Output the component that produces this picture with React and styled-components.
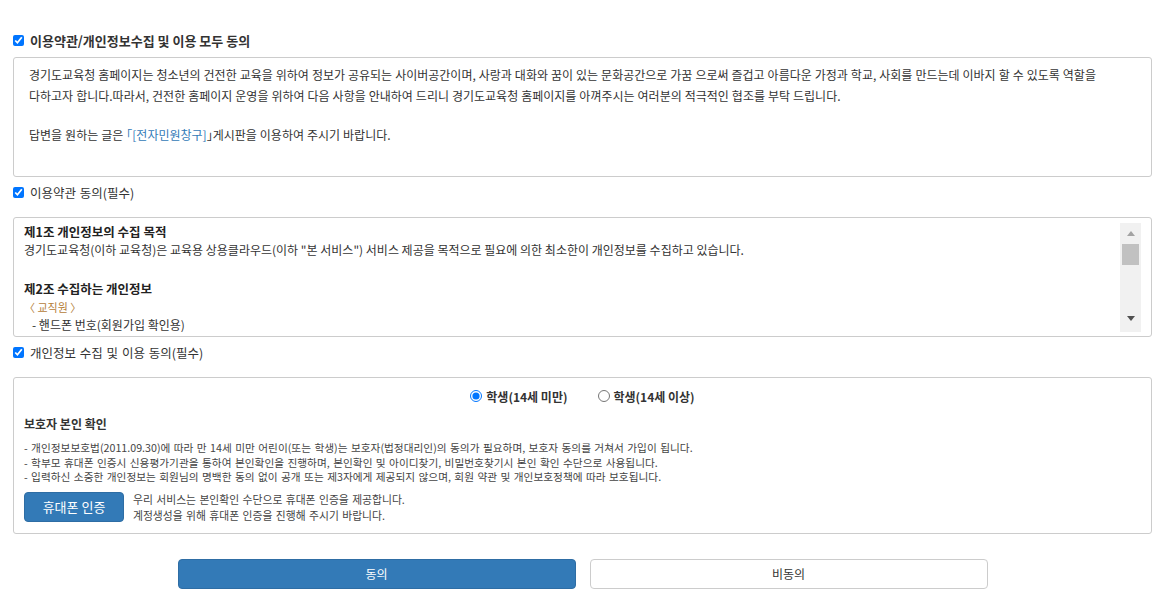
import React from "react";
import styled, { createGlobalStyle } from "styled-components";

const GlobalStyle = createGlobalStyle`
  html, body {
    margin: 0;
    padding: 0;
    background: #fff;
  }
  body {
    font-family: "Noto Sans CJK KR", "Noto Sans", sans-serif;
    color: #333;
    font-size: 12px;
  }
  * {
    box-sizing: border-box;
  }
`;

const Page = styled.div`
  width: 1176px;
  padding: 30px 24px 0 13px;
`;

const CheckRow = styled.label`
  display: flex;
  align-items: center;
  gap: 6px;
  height: 20px;
  margin: ${(p) => (p.$first ? "0 0 7px" : "5px 0 15px")};
  font-size: ${(p) => (p.$bold ? "13px" : "12.5px")};
  font-weight: ${(p) => (p.$bold ? 700 : 400)};
  word-spacing: ${(p) => (p.$bold ? "0" : "1px")};
  color: #333;
`;

const Check = styled.input.attrs({ type: "checkbox" })`
  width: 11px;
  height: 11px;
  margin: 0;
`;

const Panel = styled.div`
  border: 1px solid #ccc;
  border-radius: 3px;
  background: #fff;
`;

const NoticeBox = styled(Panel)`
  height: 120px;
  padding: 6px 15px;
  font-size: 12px;
  line-height: 21px;
  word-spacing: 0.3px;
  overflow: hidden;
`;

const NoticePara = styled.p`
  margin: 0 0 ${(p) => p.$gap || 0}px;
`;

const LinkText = styled.a`
  color: #337ab7;
  text-decoration: none;
`;

const TermsBox = styled(Panel)`
  display: flex;
  height: 120px;
  padding: 5px 10px 4px 10px;
`;

const TermsScroll = styled.div`
  flex: 1;
  overflow: hidden;
  font-size: 12px;
  line-height: 18px;
`;

const TermsTitle = styled.h4`
  margin: ${(p) => (p.$spaced ? "21px 0 0" : "0")};
  font-size: 12.5px;
  font-weight: 700;
  line-height: 18px;
  color: #222;
`;

const Group = styled.div`
  font-size: 11px;
  color: #b5803a;
`;

const Item = styled.div`
  padding-left: 8px;
`;

const ScrollTrack = styled.div`
  display: flex;
  flex-direction: column;
  width: 21px;
  background: #f1f1f1;
`;

const ScrollButton = styled.div`
  display: flex;
  align-items: center;
  justify-content: center;
  height: 21px;
  padding-bottom: ${(p) => (p.$down ? "6px" : "0")};
`;

const ScrollThumb = styled.div`
  height: 21px;
  margin: 0 2px;
  background: #c1c1c1;
`;

const ScrollGap = styled.div`
  flex: 1;
`;

const AuthBox = styled(Panel)`
  padding: 8px 10px 10px;
`;

const RadioRow = styled.div`
  display: flex;
  justify-content: center;
  align-items: center;
  gap: 30px;
  height: 20px;
`;

const RadioLabel = styled.label`
  display: flex;
  align-items: center;
  gap: 4px;
  font-size: 12px;
  font-weight: 700;
  color: #333;
`;

const Radio = styled.input.attrs({ type: "radio" })`
  width: 12px;
  height: 12px;
  margin: 0;
`;

const AuthTitle = styled.h5`
  margin: 9px 0 0;
  font-size: 12px;
  font-weight: 700;
  line-height: 18px;
  color: #333;
`;

const Bullets = styled.ul`
  list-style: none;
  margin: 8px 0 0;
  padding: 0;
  font-size: 10.7px;
  line-height: 14.5px;
  word-spacing: 1px;
  color: #444;
`;

const PhoneRow = styled.div`
  display: flex;
  align-items: center;
  gap: 9px;
  margin-top: 6px;
`;

const Button = styled.button`
  height: 30px;
  border-radius: 4px;
  font-family: inherit;
  font-size: 12px;
  cursor: pointer;
  border: 1px solid ${(p) => (p.$primary ? "#2e6da4" : "#ccc")};
  background: ${(p) => (p.$primary ? "#337ab7" : "#fff")};
  color: ${(p) => (p.$primary ? "#fff" : "#333")};
`;

const PhoneButton = styled(Button)`
  width: 100px;
  font-size: 13px;
`;

const PhoneNote = styled.div`
  font-size: 10.8px;
  line-height: 16px;
  word-spacing: 1px;
  color: #444;
`;

const Footer = styled.div`
  display: flex;
  justify-content: center;
  gap: 14px;
  margin-top: 25px;
`;

const FooterButton = styled(Button)`
  width: 398px;
`;

function Arrow({ down }) {
  return (
    <svg width="8" height="5" viewBox="0 0 8 5">
      <polygon
        points={down ? "0,0 8,0 4,5" : "0,5 8,5 4,0"}
        fill={down ? "#505050" : "#a3a3a3"}
      />
    </svg>
  );
}

export default function App() {
  return (
    <Page>
      <GlobalStyle />
      <CheckRow $first $bold>
        <Check defaultChecked />
        이용약관/개인정보수집 및 이용 모두 동의
      </CheckRow>

      <NoticeBox>
        <NoticePara>
          경기도교육청 홈페이지는 청소년의 건전한 교육을 위하여 정보가 공유되는 사이버공간이며, 사랑과 대화와 꿈이 있는
          문화공간으로 가꿈 으로써 즐겁고 아름다운 가정과 학교, 사회를 만드는데 이바지 할 수 있도록 역할을
        </NoticePara>
        <NoticePara $gap={18}>
          다하고자 합니다.따라서, 건전한 홈페이지 운영을 위하여 다음 사항을 안내하여 드리니 경기도교육청 홈페이지를
          아껴주시는 여러분의 적극적인 협조를 부탁 드립니다.
        </NoticePara>
        <NoticePara>
          답변을 원하는 글은 <LinkText href="#">｢[전자민원창구]</LinkText>｣게시판을 이용하여 주시기 바랍니다.
        </NoticePara>
      </NoticeBox>

      <CheckRow>
        <Check defaultChecked />
        이용약관 동의(필수)
      </CheckRow>

      <TermsBox>
        <TermsScroll>
          <TermsTitle>제1조 개인정보의 수집 목적</TermsTitle>
          <div>
            경기도교육청(이하 교육청)은 교육용 상용클라우드(이하 "본 서비스") 서비스 제공을 목적으로 필요에 의한 최소한이
            개인정보를 수집하고 있습니다.
          </div>
          <TermsTitle $spaced>제2조 수집하는 개인정보</TermsTitle>
          <Group>〈 교직원 〉</Group>
          <Item>- 핸드폰 번호(회원가입 확인용)</Item>
        </TermsScroll>
        <ScrollTrack>
          <ScrollButton>
            <Arrow />
          </ScrollButton>
          <ScrollThumb />
          <ScrollGap />
          <ScrollButton $down>
            <Arrow down />
          </ScrollButton>
        </ScrollTrack>
      </TermsBox>

      <CheckRow>
        <Check defaultChecked />
        개인정보 수집 및 이용 동의(필수)
      </CheckRow>

      <AuthBox>
        <RadioRow>
          <RadioLabel>
            <Radio name="age" defaultChecked />
            학생(14세 미만)
          </RadioLabel>
          <RadioLabel>
            <Radio name="age" />
            학생(14세 이상)
          </RadioLabel>
        </RadioRow>
        <AuthTitle>보호자 본인 확인</AuthTitle>
        <Bullets>
          <li>
            - 개인정보보호법(2011.09.30)에 따라 만 14세 미만 어린이(또는 학생)는 보호자(법정대리인)의 동의가 필요하며,
            보호자 동의를 거쳐서 가입이 됩니다.
          </li>
          <li>
            - 학부모 휴대폰 인증시 신용평가기관을 통하여 본인확인을 진행하며, 본인확인 및 아이디찾기, 비밀번호찾기시 본인
            확인 수단으로 사용됩니다.
          </li>
          <li>
            - 입력하신 소중한 개인정보는 회원님의 명백한 동의 없이 공개 또는 제3자에게 제공되지 않으며, 회원 약관 및
            개인보호정책에 따라 보호됩니다.
          </li>
        </Bullets>
        <PhoneRow>
          <PhoneButton $primary>휴대폰 인증</PhoneButton>
          <PhoneNote>
            우리 서비스는 본인확인 수단으로 휴대폰 인증을 제공합니다.
            <br />
            계정생성을 위해 휴대폰 인증을 진행해 주시기 바랍니다.
          </PhoneNote>
        </PhoneRow>
      </AuthBox>

      <Footer>
        <FooterButton $primary>동의</FooterButton>
        <FooterButton>비동의</FooterButton>
      </Footer>
    </Page>
  );
}
